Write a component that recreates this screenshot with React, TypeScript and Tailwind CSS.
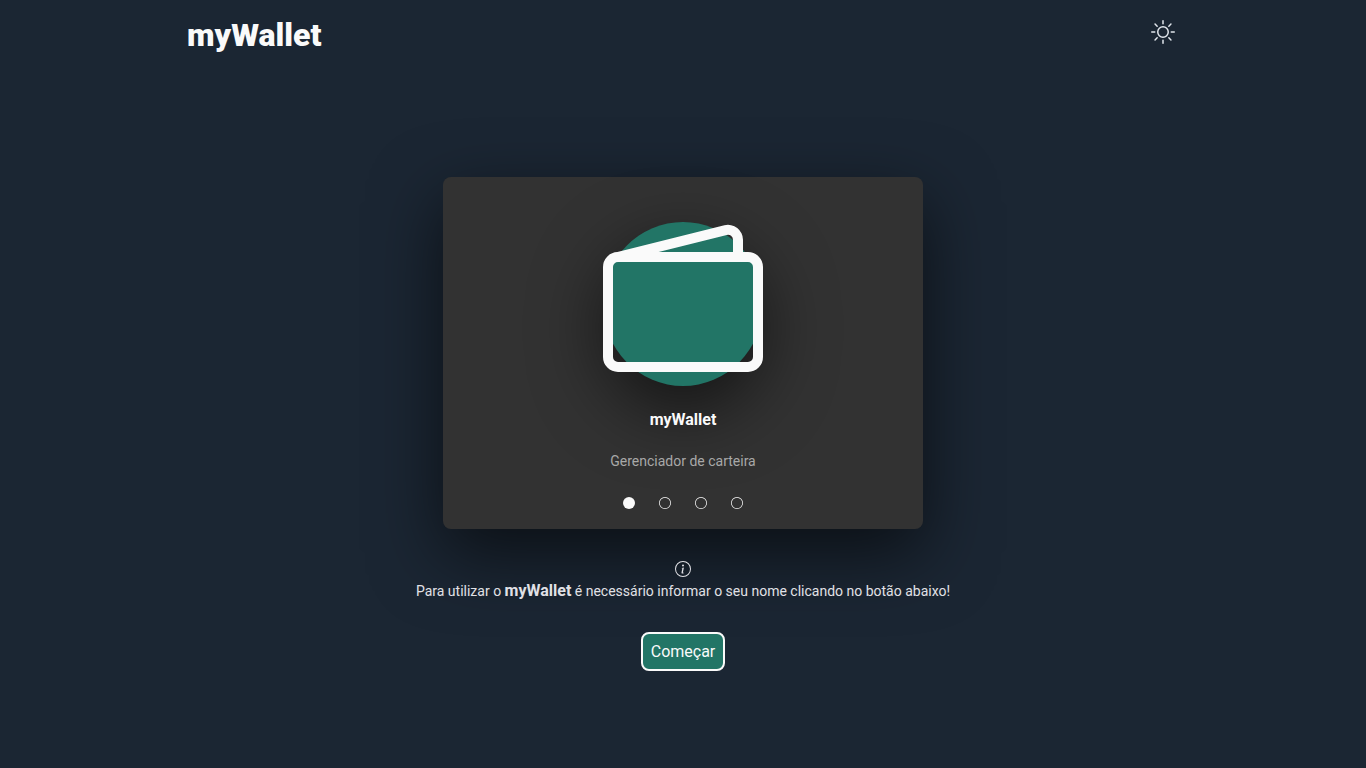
import { useState } from "react";
import { BsCircle, BsCircleFill, BsInfoCircle, BsSun, BsWallet2 } from "react-icons/bs";

const slides = [1, 2, 3, 4];

export default function App() {
  const [active, setActive] = useState(1);

  return (
    <div className="flex min-h-screen flex-col bg-[#1b2633] font-[Roboto,sans-serif] text-[#fafafa]">
      <header className="mx-auto flex w-full max-w-5xl items-start justify-between px-4 pt-4">
        <h1 className="text-[32px] leading-[38px] font-black">myWallet</h1>
        <button type="button" aria-label="Alternar tema" className="p-1 text-[#e1e6ec]">
          <BsSun size={24} />
        </button>
      </header>

      <main className="flex flex-col items-center px-4 pt-[123px]">
        <section className="flex w-full max-w-[480px] flex-col items-center rounded-lg bg-[#323232] px-4 pt-[45px] pb-5 shadow-[0_24px_70px_rgba(0,0,0,0.6)]">
          <div className="h-[164px] w-40 rounded-[50%] bg-[#227566] shadow-[0_24px_70px_rgba(0,0,0,0.6)]">
            <BsWallet2 size={160} />
          </div>
          <h2 className="mt-6 text-base leading-5 font-bold">myWallet</h2>
          <p className="mt-[23px] text-sm leading-4 text-[#a8a8a8]">Gerenciador de carteira</p>
          <nav aria-label="Slides" className="mt-7 flex gap-6">
            {slides.map((slide) => (
              <button
                key={slide}
                type="button"
                aria-label={`Slide ${slide}`}
                aria-current={slide === active}
                onClick={() => setActive(slide)}
              >
                {slide === active ? <BsCircleFill size={12} /> : <BsCircle size={12} />}
              </button>
            ))}
          </nav>
        </section>

        <div className="mt-8 flex flex-col items-center text-[#e1e1e6]">
          <BsInfoCircle size={16} />
          <p className="mt-1 text-center text-sm leading-5">
            Para utilizar o <strong className="text-base leading-5 font-bold">myWallet</strong> é necessário
            informar o seu nome clicando no botão abaixo!
          </p>
        </div>

        <button
          type="button"
          className="mt-[31px] rounded-lg border-2 border-[#fafafa] bg-[#227566] p-2 text-base leading-[19px]"
        >
          Começar
        </button>
      </main>
    </div>
  );
}
